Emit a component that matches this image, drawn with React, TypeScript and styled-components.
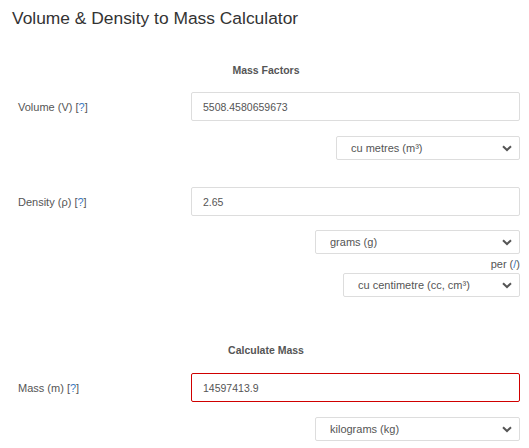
import { createGlobalStyle } from 'styled-components';
import styled from 'styled-components';

const GlobalStyle = createGlobalStyle`
    body {
        margin: 0;
        background: #fff;
        font-family: 'Liberation Sans', Arial, sans-serif;
        color: #555;
    }
`;

const Chevron = () => (
    <ChevronIcon viewBox="0 0 10 7" width="10" height="7">
        <path d="M1 1.2 L5 5 L9 1.2" fill="none" stroke="#555" strokeWidth="2" />
    </ChevronIcon>
);

type UnitProps = { width: number; top: number; value: string };

const UnitSelect = ({ width, top, value }: UnitProps) => (
    <SelectRow $top={top}>
        <SelectWrap $width={width}>
            <Select defaultValue={value}>
                <option>{value}</option>
            </Select>
            <Chevron />
        </SelectWrap>
    </SelectRow>
);

const Help = () => (
    <>
        {' '}[<HelpMark>?</HelpMark>]
    </>
);

const App = () => {
    return (
        <Page>
            <GlobalStyle />
            <Title>Volume &amp; Density to Mass Calculator</Title>

            <SectionHeading $top={34}>Mass Factors</SectionHeading>
            <FieldRow $top={15}>
                <Label>
                    Volume (V)
                    <Help />
                </Label>
                <Input defaultValue="5508.4580659673" />
            </FieldRow>
            <UnitSelect top={15} width={184} value="cu metres (m³)" />

            <FieldRow $top={27}>
                <Label>
                    Density (ρ)
                    <Help />
                </Label>
                <Input defaultValue="2.65" />
            </FieldRow>
            <UnitSelect top={14} width={205} value="grams (g)" />
            <Per>
                per (<HelpMark>/</HelpMark>)
            </Per>
            <UnitSelect top={2} width={177} value="cu centimetre (cc, cm³)" />

            <SectionHeading $top={46}>Calculate Mass</SectionHeading>
            <FieldRow $top={16}>
                <Label>
                    Mass (m)
                    <Help />
                </Label>
                <ResultInput readOnly value="14597413.9" />
            </FieldRow>
            <UnitSelect top={15} width={205} value="kilograms (kg)" />
        </Page>
    );
};

const Page = styled.div`
    width: 529px;
    height: 448px;
    box-sizing: border-box;
    padding: 0 9px 0 12px;
    overflow: hidden;
`;

const Title = styled.h1`
    margin: 0;
    padding-top: 7px;
    font-size: 17.4px;
    line-height: 22px;
    font-weight: normal;
    color: #333;
`;

const SectionHeading = styled.div<{ $top: number }>`
    margin-top: ${p => p.$top}px;
    text-align: center;
    font-size: 10.5px;
    line-height: 14px;
    font-weight: bold;
    color: #555;
`;

const FieldRow = styled.div<{ $top: number }>`
    margin-top: ${p => p.$top}px;
    display: grid;
    grid-template-columns: 179px 1fr;
    align-items: center;
`;

const Label = styled.label`
    padding-left: 6px;
    font-size: 11px;
    color: #555;
`;

const HelpMark = styled.span`
    color: #3a78c3;
`;

const Input = styled.input`
    box-sizing: border-box;
    width: 100%;
    height: 29px;
    padding: 0 11px;
    border: 1px solid #ddd;
    border-radius: 2px;
    background: #fff;
    font-family: inherit;
    font-size: 10.5px;
    color: #555;
    outline: none;
`;

const ResultInput = styled(Input)`
    border: 1px solid #d00000;
`;

const SelectRow = styled.div<{ $top: number }>`
    margin-top: ${p => p.$top}px;
    display: flex;
    justify-content: flex-end;
`;

const SelectWrap = styled.div<{ $width: number }>`
    position: relative;
    width: ${p => p.$width}px;
`;

const Select = styled.select`
    box-sizing: border-box;
    width: 100%;
    height: 24px;
    padding: 0 24px 0 14px;
    border: 1px solid #ddd;
    border-radius: 2px;
    background: #fff;
    appearance: none;
    font-family: inherit;
    font-size: 11px;
    color: #555;
    outline: none;
`;

const ChevronIcon = styled.svg`
    position: absolute;
    right: 8px;
    top: 9px;
    pointer-events: none;
`;

const Per = styled.div`
    text-align: right;
    font-size: 11px;
    line-height: 14px;
    margin-top: 3px;
    color: #555;
`;

export default App;
